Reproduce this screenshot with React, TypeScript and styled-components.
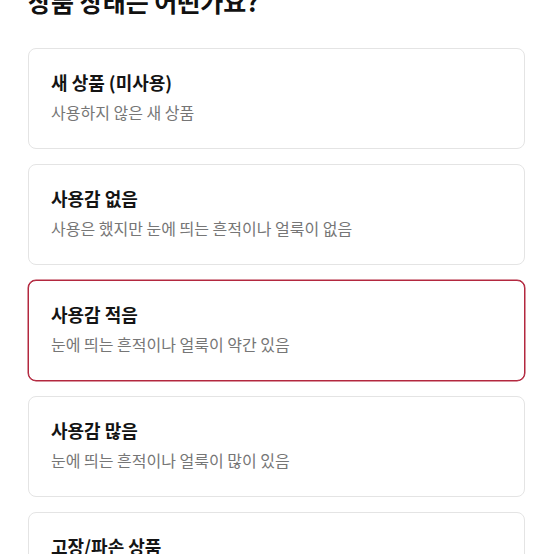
import React, { useState } from "react";
import styled, { createGlobalStyle } from "styled-components";

const GlobalStyle = createGlobalStyle`
  html, body {
    margin: 0;
    padding: 0;
    background: #ffffff;
    overflow: hidden;
  }
  body {
    font-family: "Noto Sans CJK KR", "Noto Sans", sans-serif;
    color: #1a1a1a;
  }
`;

const options = [
  { title: "새 상품 (미사용)", desc: "사용하지 않은 새 상품" },
  { title: "사용감 없음", desc: "사용은 했지만 눈에 띄는 흔적이나 얼룩이 없음" },
  { title: "사용감 적음", desc: "눈에 띄는 흔적이나 얼룩이 약간 있음" },
  { title: "사용감 많음", desc: "눈에 띄는 흔적이나 얼룩이 많이 있음" },
  { title: "고장/파손 상품", desc: "기능 이상이나 외관 손상 등으로 수리가 필요함" },
];

export default function App() {
  const [selected, setSelected] = useState(2);

  return (
    <>
      <GlobalStyle />
      <Page>
        <Heading>상품 상태는 어떤가요?</Heading>
        <List>
          {options.map((o, i) => (
            <OptionCard
              key={o.title}
              $active={i === selected}
              onClick={() => setSelected(i)}
            >
              <OptionTitle>{o.title}</OptionTitle>
              <OptionDesc>{o.desc}</OptionDesc>
            </OptionCard>
          ))}
        </List>
      </Page>
    </>
  );
}

const Page = styled.div`
  padding: 0 29px 0 28px;
`;

const Heading = styled.h2`
  margin: -15px 0 31px;
  font-size: 25px;
  line-height: 32px;
  font-weight: 700;
  color: #111111;
`;

const List = styled.div`
  display: flex;
  flex-direction: column;
  gap: 15px;
`;

const OptionCard = styled.button<{ $active?: boolean }>`
  display: flex;
  flex-direction: column;
  align-items: flex-start;
  text-align: left;
  width: 100%;
  padding: 21px 22px 25px;
  background: #ffffff;
  border: 1px solid ${(p) => (p.$active ? "#b3283f" : "#e4e4e4")};
  box-shadow: ${(p) => (p.$active ? "0 0 0 0.5px #b3283f" : "none")};
  border-radius: 8px;
  font-family: inherit;
  cursor: pointer;
`;

const OptionTitle = styled.div`
  font-size: 18px;
  line-height: 24px;
  font-weight: 700;
  color: #141414;
`;

const OptionDesc = styled.div`
  margin-top: 7px;
  font-size: 16px;
  line-height: 22px;
  color: #767676;
`;
